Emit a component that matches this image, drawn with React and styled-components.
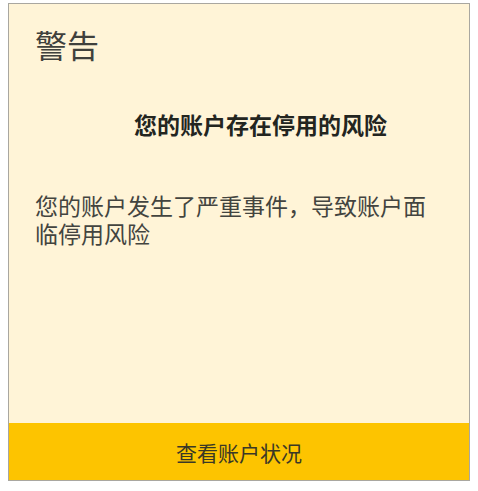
import React from 'react';
import styled, { createGlobalStyle } from 'styled-components';

const GlobalStyle = createGlobalStyle`
  html, body {
    margin: 0;
    padding: 0;
    background: #ffffff;
  }
  body {
    font-family: "Noto Sans CJK SC", "Noto Sans", sans-serif;
  }
`;

const Card = styled.div`
  margin: 3px 0 0 8px;
  width: 462px;
  height: 478px;
  box-sizing: border-box;
  border: 1px solid #a9a7a0;
  background: #fff4d7;
  display: flex;
  flex-direction: column;
`;

const Content = styled.div`
  flex: 1;
  padding: 20px 26px 0 26px;
  display: flex;
  flex-direction: column;
`;

const Title = styled.h1`
  margin: 0;
  font-size: 32px;
  line-height: 40px;
  font-weight: 400;
  color: #3f403c;
`;

const Subtitle = styled.h2`
  margin: 45px 0 0 0;
  padding-left: 99px;
  font-size: 23px;
  line-height: 30px;
  font-weight: 700;
  color: #23251f;
`;

const Message = styled.p`
  margin: 52px 0 0 0;
  font-size: 23px;
  line-height: 28px;
  font-weight: 400;
  color: #43443f;
`;

const ActionButton = styled.button`
  height: 57px;
  border: none;
  margin: 0;
  background: #fdc400;
  color: #3a3826;
  font-family: inherit;
  font-size: 21px;
  display: flex;
  align-items: center;
  justify-content: center;
  cursor: pointer;
`;

export default function App() {
  return (
    <>
      <GlobalStyle />
      <Card>
        <Content>
          <Title>警告</Title>
          <Subtitle>您的账户存在停用的风险</Subtitle>
          <Message>您的账户发生了严重事件，导致账户面临停用风险</Message>
        </Content>
        <ActionButton>查看账户状况</ActionButton>
      </Card>
    </>
  );
}
